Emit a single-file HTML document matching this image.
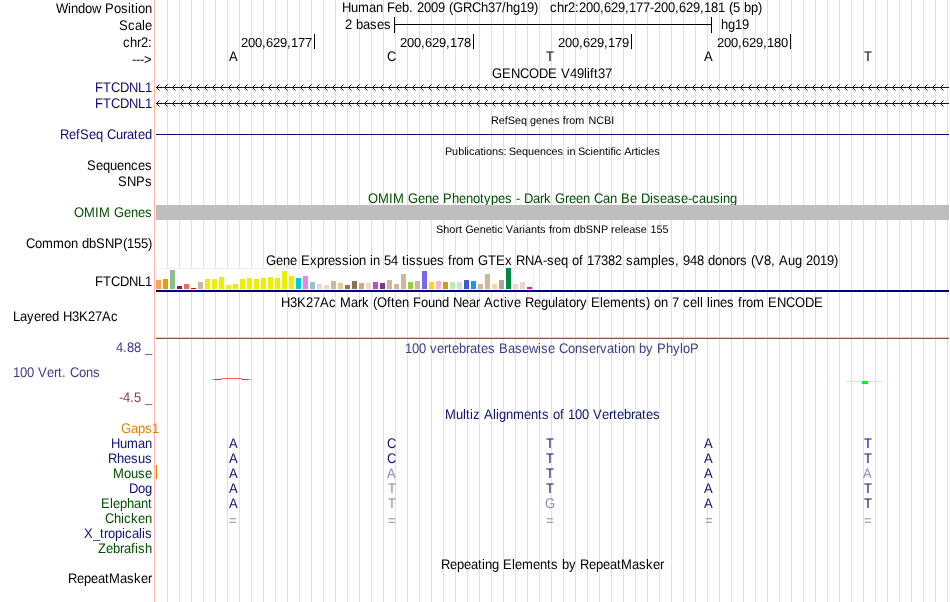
<!DOCTYPE html>
<html><head><meta charset="utf-8"><title>UCSC Genome Browser</title>
<style>html,body{margin:0;padding:0;background:#fff}svg{display:block;will-change:transform}svg{font-family:"Liberation Sans", sans-serif;font-size:13px}text{white-space:pre}</style>
</head><body>
<svg width="950" height="602" viewBox="0 0 950 602">
<rect x="0" y="0" width="950" height="602" fill="#fff"/>
<g shape-rendering="crispEdges">
<rect x="167" y="0" width="1" height="602" fill="#dcdcff"/>
<rect x="179" y="0" width="1" height="602" fill="#dcdcff"/>
<rect x="191" y="0" width="1" height="602" fill="#dcdcff"/>
<rect x="203" y="0" width="1" height="602" fill="#dcdcff"/>
<rect x="215" y="0" width="1" height="602" fill="#dcdcff"/>
<rect x="227" y="0" width="1" height="602" fill="#dcdcff"/>
<rect x="239" y="0" width="1" height="602" fill="#dcdcff"/>
<rect x="251" y="0" width="1" height="602" fill="#dcdcff"/>
<rect x="263" y="0" width="1" height="602" fill="#dcdcff"/>
<rect x="275" y="0" width="1" height="602" fill="#dcdcff"/>
<rect x="287" y="0" width="1" height="602" fill="#dcdcff"/>
<rect x="299" y="0" width="1" height="602" fill="#dcdcff"/>
<rect x="311" y="0" width="1" height="602" fill="#dcdcff"/>
<rect x="323" y="0" width="1" height="602" fill="#dcdcff"/>
<rect x="335" y="0" width="1" height="602" fill="#dcdcff"/>
<rect x="347" y="0" width="1" height="602" fill="#dcdcff"/>
<rect x="359" y="0" width="1" height="602" fill="#dcdcff"/>
<rect x="371" y="0" width="1" height="602" fill="#dcdcff"/>
<rect x="383" y="0" width="1" height="602" fill="#dcdcff"/>
<rect x="395" y="0" width="1" height="602" fill="#dcdcff"/>
<rect x="407" y="0" width="1" height="602" fill="#dcdcff"/>
<rect x="419" y="0" width="1" height="602" fill="#dcdcff"/>
<rect x="431" y="0" width="1" height="602" fill="#dcdcff"/>
<rect x="443" y="0" width="1" height="602" fill="#dcdcff"/>
<rect x="455" y="0" width="1" height="602" fill="#dcdcff"/>
<rect x="467" y="0" width="1" height="602" fill="#dcdcff"/>
<rect x="479" y="0" width="1" height="602" fill="#dcdcff"/>
<rect x="491" y="0" width="1" height="602" fill="#dcdcff"/>
<rect x="503" y="0" width="1" height="602" fill="#dcdcff"/>
<rect x="515" y="0" width="1" height="602" fill="#dcdcff"/>
<rect x="527" y="0" width="1" height="602" fill="#dcdcff"/>
<rect x="539" y="0" width="1" height="602" fill="#dcdcff"/>
<rect x="551" y="0" width="1" height="602" fill="#dcdcff"/>
<rect x="563" y="0" width="1" height="602" fill="#dcdcff"/>
<rect x="575" y="0" width="1" height="602" fill="#dcdcff"/>
<rect x="587" y="0" width="1" height="602" fill="#dcdcff"/>
<rect x="599" y="0" width="1" height="602" fill="#dcdcff"/>
<rect x="611" y="0" width="1" height="602" fill="#dcdcff"/>
<rect x="623" y="0" width="1" height="602" fill="#dcdcff"/>
<rect x="635" y="0" width="1" height="602" fill="#dcdcff"/>
<rect x="647" y="0" width="1" height="602" fill="#dcdcff"/>
<rect x="659" y="0" width="1" height="602" fill="#dcdcff"/>
<rect x="671" y="0" width="1" height="602" fill="#dcdcff"/>
<rect x="683" y="0" width="1" height="602" fill="#dcdcff"/>
<rect x="695" y="0" width="1" height="602" fill="#dcdcff"/>
<rect x="707" y="0" width="1" height="602" fill="#dcdcff"/>
<rect x="719" y="0" width="1" height="602" fill="#dcdcff"/>
<rect x="731" y="0" width="1" height="602" fill="#dcdcff"/>
<rect x="743" y="0" width="1" height="602" fill="#dcdcff"/>
<rect x="755" y="0" width="1" height="602" fill="#dcdcff"/>
<rect x="767" y="0" width="1" height="602" fill="#dcdcff"/>
<rect x="779" y="0" width="1" height="602" fill="#dcdcff"/>
<rect x="791" y="0" width="1" height="602" fill="#dcdcff"/>
<rect x="803" y="0" width="1" height="602" fill="#dcdcff"/>
<rect x="815" y="0" width="1" height="602" fill="#dcdcff"/>
<rect x="827" y="0" width="1" height="602" fill="#dcdcff"/>
<rect x="839" y="0" width="1" height="602" fill="#dcdcff"/>
<rect x="851" y="0" width="1" height="602" fill="#dcdcff"/>
<rect x="863" y="0" width="1" height="602" fill="#dcdcff"/>
<rect x="875" y="0" width="1" height="602" fill="#dcdcff"/>
<rect x="887" y="0" width="1" height="602" fill="#dcdcff"/>
<rect x="899" y="0" width="1" height="602" fill="#dcdcff"/>
<rect x="911" y="0" width="1" height="602" fill="#dcdcff"/>
<rect x="923" y="0" width="1" height="602" fill="#dcdcff"/>
<rect x="935" y="0" width="1" height="602" fill="#dcdcff"/>
<rect x="947" y="0" width="1" height="602" fill="#dcdcff"/>
<rect x="154" y="0" width="1" height="602" fill="#ffb4b4"/>
</g>
<text x="56 68 71 78 85 92 101 105 114 121 128 131 135 138 145" transform="matrix(1 0 0.001 1.07 0 12.6)">Window Position</text>
<text x="119 128 135 142 145" transform="matrix(1 0 0.001 1.07 0 29.6)">Scale</text>
<text x="123 130 137 141 148" transform="matrix(1 0 0.001 1.07 0 46.7)">chr2:</text>
<text x="132 136 140 144" transform="matrix(1 0 0.001 1.07 0 63.5)">---&gt;</text>
<text x="342 351 358 369 376 383 387 395 402 409 413 417 424 431 438 445 449 453 463 472 481 488 495 502 506 513 520 527 534" transform="matrix(1 0 0.001 1.07 0 12.2)">Human Feb. 2009 (GRCh37/hg19)</text>
<text x="550 557 564 568 575 579 586 593 600 604 611 618 625 629 636 643 650 654 661 668 675 679 686 693 700 704 711 718 725 729 733 740 744 751 758" transform="matrix(1 0 0.001 1.07 0 12.2)">chr2:200,629,177-200,629,181 (5 bp)</text>
<text x="345 352 356 363 370 377 384" transform="matrix(1 0 0.001 1.07 0 29)">2 bases</text>
<text x="721 728 735 742" transform="matrix(1 0 0.001 1.07 0 29)">hg19</text>
<g shape-rendering="crispEdges">
<rect x="394" y="24" width="318" height="1" fill="#000"/>
<rect x="394" y="17" width="1" height="16" fill="#000"/>
<rect x="711" y="17" width="1" height="16" fill="#000"/>
</g>
<g shape-rendering="crispEdges">
<rect x="314" y="34" width="1" height="15" fill="#000"/>
<rect x="473" y="34" width="1" height="15" fill="#000"/>
<rect x="631" y="34" width="1" height="15" fill="#000"/>
<rect x="790" y="34" width="1" height="15" fill="#000"/>
</g>
<text x="241 248 255 262 266 273 280 287 291 298 305" transform="matrix(1 0 0.001 1.0 0 47)">200,629,177</text>
<text x="400 407 414 421 425 432 439 446 450 457 464" transform="matrix(1 0 0.001 1.0 0 47)">200,629,178</text>
<text x="558 565 572 579 583 590 597 604 608 615 622" transform="matrix(1 0 0.001 1.0 0 47)">200,629,179</text>
<text x="717 724 731 738 742 749 756 763 767 774 781" transform="matrix(1 0 0.001 1.0 0 47)">200,629,180</text>
<text x="229" transform="matrix(1 0 0.001 1.07 0 61)">A</text>
<text x="387" transform="matrix(1 0 0.001 1.07 0 61)">C</text>
<text x="546" transform="matrix(1 0 0.001 1.07 0 61)">T</text>
<text x="704" transform="matrix(1 0 0.001 1.07 0 61)">A</text>
<text x="864" transform="matrix(1 0 0.001 1.07 0 61)">T</text>
<text x="492 502 511 520 529 539 548 557 561 570 577 584 587 590 594 598 605" transform="matrix(1 0 0.001 1.07 0 78)">GENCODE V49lift37</text>
<text x="95 103 111 120 129 138 145" transform="matrix(1 0 0.001 1.07 0 92)" fill="#0c0c78">FTCDNL1</text>
<text x="95 103 111 120 129 138 145" transform="matrix(1 0 0.001 1.07 0 108)" fill="#0c0c78">FTCDNL1</text>
<rect x="156" y="87" width="793" height="1" fill="#0c0c78" shape-rendering="crispEdges"/>
<path d="M159.5 84.5L156.5 87.5L159.5 90.5M167.5 84.5L164.5 87.5L167.5 90.5M175.5 84.5L172.5 87.5L175.5 90.5M183.5 84.5L180.5 87.5L183.5 90.5M191.5 84.5L188.5 87.5L191.5 90.5M199.5 84.5L196.5 87.5L199.5 90.5M207.5 84.5L204.5 87.5L207.5 90.5M215.5 84.5L212.5 87.5L215.5 90.5M223.5 84.5L220.5 87.5L223.5 90.5M231.5 84.5L228.5 87.5L231.5 90.5M239.5 84.5L236.5 87.5L239.5 90.5M247.5 84.5L244.5 87.5L247.5 90.5M255.5 84.5L252.5 87.5L255.5 90.5M263.5 84.5L260.5 87.5L263.5 90.5M271.5 84.5L268.5 87.5L271.5 90.5M279.5 84.5L276.5 87.5L279.5 90.5M287.5 84.5L284.5 87.5L287.5 90.5M295.5 84.5L292.5 87.5L295.5 90.5M303.5 84.5L300.5 87.5L303.5 90.5M311.5 84.5L308.5 87.5L311.5 90.5M319.5 84.5L316.5 87.5L319.5 90.5M327.5 84.5L324.5 87.5L327.5 90.5M335.5 84.5L332.5 87.5L335.5 90.5M343.5 84.5L340.5 87.5L343.5 90.5M351.5 84.5L348.5 87.5L351.5 90.5M359.5 84.5L356.5 87.5L359.5 90.5M367.5 84.5L364.5 87.5L367.5 90.5M375.5 84.5L372.5 87.5L375.5 90.5M383.5 84.5L380.5 87.5L383.5 90.5M391.5 84.5L388.5 87.5L391.5 90.5M399.5 84.5L396.5 87.5L399.5 90.5M407.5 84.5L404.5 87.5L407.5 90.5M415.5 84.5L412.5 87.5L415.5 90.5M423.5 84.5L420.5 87.5L423.5 90.5M431.5 84.5L428.5 87.5L431.5 90.5M439.5 84.5L436.5 87.5L439.5 90.5M447.5 84.5L444.5 87.5L447.5 90.5M455.5 84.5L452.5 87.5L455.5 90.5M463.5 84.5L460.5 87.5L463.5 90.5M471.5 84.5L468.5 87.5L471.5 90.5M479.5 84.5L476.5 87.5L479.5 90.5M487.5 84.5L484.5 87.5L487.5 90.5M495.5 84.5L492.5 87.5L495.5 90.5M503.5 84.5L500.5 87.5L503.5 90.5M511.5 84.5L508.5 87.5L511.5 90.5M519.5 84.5L516.5 87.5L519.5 90.5M527.5 84.5L524.5 87.5L527.5 90.5M535.5 84.5L532.5 87.5L535.5 90.5M543.5 84.5L540.5 87.5L543.5 90.5M551.5 84.5L548.5 87.5L551.5 90.5M559.5 84.5L556.5 87.5L559.5 90.5M567.5 84.5L564.5 87.5L567.5 90.5M575.5 84.5L572.5 87.5L575.5 90.5M583.5 84.5L580.5 87.5L583.5 90.5M591.5 84.5L588.5 87.5L591.5 90.5M599.5 84.5L596.5 87.5L599.5 90.5M607.5 84.5L604.5 87.5L607.5 90.5M615.5 84.5L612.5 87.5L615.5 90.5M623.5 84.5L620.5 87.5L623.5 90.5M631.5 84.5L628.5 87.5L631.5 90.5M639.5 84.5L636.5 87.5L639.5 90.5M647.5 84.5L644.5 87.5L647.5 90.5M655.5 84.5L652.5 87.5L655.5 90.5M663.5 84.5L660.5 87.5L663.5 90.5M671.5 84.5L668.5 87.5L671.5 90.5M679.5 84.5L676.5 87.5L679.5 90.5M687.5 84.5L684.5 87.5L687.5 90.5M695.5 84.5L692.5 87.5L695.5 90.5M703.5 84.5L700.5 87.5L703.5 90.5M711.5 84.5L708.5 87.5L711.5 90.5M719.5 84.5L716.5 87.5L719.5 90.5M727.5 84.5L724.5 87.5L727.5 90.5M735.5 84.5L732.5 87.5L735.5 90.5M743.5 84.5L740.5 87.5L743.5 90.5M751.5 84.5L748.5 87.5L751.5 90.5M759.5 84.5L756.5 87.5L759.5 90.5M767.5 84.5L764.5 87.5L767.5 90.5M775.5 84.5L772.5 87.5L775.5 90.5M783.5 84.5L780.5 87.5L783.5 90.5M791.5 84.5L788.5 87.5L791.5 90.5M799.5 84.5L796.5 87.5L799.5 90.5M807.5 84.5L804.5 87.5L807.5 90.5M815.5 84.5L812.5 87.5L815.5 90.5M823.5 84.5L820.5 87.5L823.5 90.5M831.5 84.5L828.5 87.5L831.5 90.5M839.5 84.5L836.5 87.5L839.5 90.5M847.5 84.5L844.5 87.5L847.5 90.5M855.5 84.5L852.5 87.5L855.5 90.5M863.5 84.5L860.5 87.5L863.5 90.5M871.5 84.5L868.5 87.5L871.5 90.5M879.5 84.5L876.5 87.5L879.5 90.5M887.5 84.5L884.5 87.5L887.5 90.5M895.5 84.5L892.5 87.5L895.5 90.5M903.5 84.5L900.5 87.5L903.5 90.5M911.5 84.5L908.5 87.5L911.5 90.5M919.5 84.5L916.5 87.5L919.5 90.5M927.5 84.5L924.5 87.5L927.5 90.5M935.5 84.5L932.5 87.5L935.5 90.5M943.5 84.5L940.5 87.5L943.5 90.5" fill="none" stroke="#0c0c78" stroke-width="1"/>
<rect x="156" y="103" width="793" height="1" fill="#0c0c78" shape-rendering="crispEdges"/>
<path d="M159.5 100.5L156.5 103.5L159.5 106.5M167.5 100.5L164.5 103.5L167.5 106.5M175.5 100.5L172.5 103.5L175.5 106.5M183.5 100.5L180.5 103.5L183.5 106.5M191.5 100.5L188.5 103.5L191.5 106.5M199.5 100.5L196.5 103.5L199.5 106.5M207.5 100.5L204.5 103.5L207.5 106.5M215.5 100.5L212.5 103.5L215.5 106.5M223.5 100.5L220.5 103.5L223.5 106.5M231.5 100.5L228.5 103.5L231.5 106.5M239.5 100.5L236.5 103.5L239.5 106.5M247.5 100.5L244.5 103.5L247.5 106.5M255.5 100.5L252.5 103.5L255.5 106.5M263.5 100.5L260.5 103.5L263.5 106.5M271.5 100.5L268.5 103.5L271.5 106.5M279.5 100.5L276.5 103.5L279.5 106.5M287.5 100.5L284.5 103.5L287.5 106.5M295.5 100.5L292.5 103.5L295.5 106.5M303.5 100.5L300.5 103.5L303.5 106.5M311.5 100.5L308.5 103.5L311.5 106.5M319.5 100.5L316.5 103.5L319.5 106.5M327.5 100.5L324.5 103.5L327.5 106.5M335.5 100.5L332.5 103.5L335.5 106.5M343.5 100.5L340.5 103.5L343.5 106.5M351.5 100.5L348.5 103.5L351.5 106.5M359.5 100.5L356.5 103.5L359.5 106.5M367.5 100.5L364.5 103.5L367.5 106.5M375.5 100.5L372.5 103.5L375.5 106.5M383.5 100.5L380.5 103.5L383.5 106.5M391.5 100.5L388.5 103.5L391.5 106.5M399.5 100.5L396.5 103.5L399.5 106.5M407.5 100.5L404.5 103.5L407.5 106.5M415.5 100.5L412.5 103.5L415.5 106.5M423.5 100.5L420.5 103.5L423.5 106.5M431.5 100.5L428.5 103.5L431.5 106.5M439.5 100.5L436.5 103.5L439.5 106.5M447.5 100.5L444.5 103.5L447.5 106.5M455.5 100.5L452.5 103.5L455.5 106.5M463.5 100.5L460.5 103.5L463.5 106.5M471.5 100.5L468.5 103.5L471.5 106.5M479.5 100.5L476.5 103.5L479.5 106.5M487.5 100.5L484.5 103.5L487.5 106.5M495.5 100.5L492.5 103.5L495.5 106.5M503.5 100.5L500.5 103.5L503.5 106.5M511.5 100.5L508.5 103.5L511.5 106.5M519.5 100.5L516.5 103.5L519.5 106.5M527.5 100.5L524.5 103.5L527.5 106.5M535.5 100.5L532.5 103.5L535.5 106.5M543.5 100.5L540.5 103.5L543.5 106.5M551.5 100.5L548.5 103.5L551.5 106.5M559.5 100.5L556.5 103.5L559.5 106.5M567.5 100.5L564.5 103.5L567.5 106.5M575.5 100.5L572.5 103.5L575.5 106.5M583.5 100.5L580.5 103.5L583.5 106.5M591.5 100.5L588.5 103.5L591.5 106.5M599.5 100.5L596.5 103.5L599.5 106.5M607.5 100.5L604.5 103.5L607.5 106.5M615.5 100.5L612.5 103.5L615.5 106.5M623.5 100.5L620.5 103.5L623.5 106.5M631.5 100.5L628.5 103.5L631.5 106.5M639.5 100.5L636.5 103.5L639.5 106.5M647.5 100.5L644.5 103.5L647.5 106.5M655.5 100.5L652.5 103.5L655.5 106.5M663.5 100.5L660.5 103.5L663.5 106.5M671.5 100.5L668.5 103.5L671.5 106.5M679.5 100.5L676.5 103.5L679.5 106.5M687.5 100.5L684.5 103.5L687.5 106.5M695.5 100.5L692.5 103.5L695.5 106.5M703.5 100.5L700.5 103.5L703.5 106.5M711.5 100.5L708.5 103.5L711.5 106.5M719.5 100.5L716.5 103.5L719.5 106.5M727.5 100.5L724.5 103.5L727.5 106.5M735.5 100.5L732.5 103.5L735.5 106.5M743.5 100.5L740.5 103.5L743.5 106.5M751.5 100.5L748.5 103.5L751.5 106.5M759.5 100.5L756.5 103.5L759.5 106.5M767.5 100.5L764.5 103.5L767.5 106.5M775.5 100.5L772.5 103.5L775.5 106.5M783.5 100.5L780.5 103.5L783.5 106.5M791.5 100.5L788.5 103.5L791.5 106.5M799.5 100.5L796.5 103.5L799.5 106.5M807.5 100.5L804.5 103.5L807.5 106.5M815.5 100.5L812.5 103.5L815.5 106.5M823.5 100.5L820.5 103.5L823.5 106.5M831.5 100.5L828.5 103.5L831.5 106.5M839.5 100.5L836.5 103.5L839.5 106.5M847.5 100.5L844.5 103.5L847.5 106.5M855.5 100.5L852.5 103.5L855.5 106.5M863.5 100.5L860.5 103.5L863.5 106.5M871.5 100.5L868.5 103.5L871.5 106.5M879.5 100.5L876.5 103.5L879.5 106.5M887.5 100.5L884.5 103.5L887.5 106.5M895.5 100.5L892.5 103.5L895.5 106.5M903.5 100.5L900.5 103.5L903.5 106.5M911.5 100.5L908.5 103.5L911.5 106.5M919.5 100.5L916.5 103.5L919.5 106.5M927.5 100.5L924.5 103.5L927.5 106.5M935.5 100.5L932.5 103.5L935.5 106.5M943.5 100.5L940.5 103.5L943.5 106.5" fill="none" stroke="#0c0c78" stroke-width="1"/>
<text x="490.9 498.74 504.77 507.78 515.02 521.06 527.09 529.9 535.93 541.97 548.0 554.04 559.46 562.7 565.71 569.33 575.36 584.4 588.4 596.24 604.07 611.31" transform="matrix(1 0 0.001 1.0 0 124)" font-size="10.85">RefSeq genes from NCBI</text>
<text x="60 69 76 80 89 96 103 107 116 123 127 134 138 145" transform="matrix(1 0 0.001 1.07 0 139)" fill="#0c0c78">RefSeq Curated</text>
<rect x="156" y="134" width="793" height="1" fill="#0c0c78" shape-rendering="crispEdges"/>
<text x="444.9 452.14 458.17 464.21 466.62 469.03 474.45 480.49 483.5 485.91 491.94 497.98 503.4 506.42 508.7 515.94 521.97 528.01 534.04 540.07 546.11 551.53 557.57 562.99 567.0 569.41 575.44 577.9 585.14 590.56 592.97 599.01 605.04 608.06 610.47 613.48 615.89 621.32 624.2 631.44 635.05 638.06 640.48 645.9 648.31 654.34" transform="matrix(1 0 0.001 1.0 0 155)" font-size="10.85">Publications: Sequences in Scientific Articles</text>
<text x="87 96 103 110 117 124 131 138 145" transform="matrix(1 0 0.001 1.07 0 170)">Sequences</text>
<text x="118 127 136 145" transform="matrix(1 0 0.001 1.07 0 186)">SNPs</text>
<text x="368 378 389 393 404 408 418 425 432 439 443 452 459 466 473 480 484 491 498 505 512 516 520 524 533 540 544 551 555 565 569 576 583 590 594 603 610 617 621 630 637 641 650 653 660 667 674 681 688 692 699 706 713 720 723 730" transform="matrix(1 0 0.001 1.07 0 203)" fill="#005000">OMIM Gene Phenotypes - Dark Green Can Be Disease-causing</text>
<text x="74 84 95 99 110 114 124 131 138 145" transform="matrix(1 0 0.001 1.07 0 217)" fill="#005000">OMIM Genes</text>
<rect x="156" y="205" width="793" height="15" fill="#bebebe" shape-rendering="crispEdges"/>
<text x="436.1 443.34 449.37 455.41 459.02 462.03 465.2 473.64 479.67 485.71 491.74 494.76 497.17 502.59 505.7 512.94 518.97 522.58 524.99 531.03 537.06 540.08 545.5 549.0 552.01 555.63 561.66 570.7 573.8 579.83 585.87 593.11 600.94 608.18 611.1 614.71 620.75 623.16 629.19 635.23 640.65 646.69 650.4 656.43 662.47" transform="matrix(1 0 0.001 1.0 0 233)" font-size="10.85">Short Genetic Variants from dbSNP release 155</text>
<text x="26 35 42 53 64 71 78 82 89 96 105 114 123 127 134 141 148" transform="matrix(1 0 0.001 1.07 0 248)">Common dbSNP(155)</text>
<text x="266 276 283 290 297 301 310 317 324 328 335 342 349 352 359 366 370 373 380 384 391 398 402 406 409 416 423 430 437 444 448 452 456 463 474 478 488 496 505 512 516 525 534 543 547 554 561 568 572 579 583 587 594 601 608 615 622 626 633 640 651 658 661 668 675 679 683 690 697 704 708 715 722 729 736 740 747 751 755 764 771 775 779 788 795 802 806 813 820 827 834" transform="matrix(1 0 0.001 1.07 0 265)">Gene Expression in 54 tissues from GTEx RNA-seq of 17382 samples, 948 donors (V8, Aug 2019)</text>
<text x="95 103 111 120 129 138 145" transform="matrix(1 0 0.001 1.07 0 286)">FTCDNL1</text>
<g shape-rendering="crispEdges">
<rect x="156" y="268" width="378" height="22" fill="#fff"/>
<rect x="156" y="268" width="378" height="1" fill="#efefef"/>
<rect x="156" y="289" width="378" height="1" fill="#f4f4f4"/>
<rect x="156" y="268" width="1" height="22" fill="#f4f4f4"/>
<rect x="533" y="268" width="1" height="22" fill="#efefef"/>
<rect x="156" y="280" width="5" height="9" fill="#FFA54F"/>
<rect x="163" y="279" width="5" height="10" fill="#EE9A00"/>
<rect x="170" y="270" width="5" height="19" fill="#8FBC8F"/>
<rect x="177" y="286" width="5" height="3" fill="#8B1C62"/>
<rect x="184" y="284" width="5" height="5" fill="#EE6A50"/>
<rect x="191" y="288" width="5" height="1" fill="#FF0000"/>
<rect x="198" y="282" width="5" height="7" fill="#CDB79E"/>
<rect x="205" y="279" width="5" height="10" fill="#EEEE00"/>
<rect x="212" y="279" width="5" height="10" fill="#EEEE00"/>
<rect x="219" y="277" width="5" height="12" fill="#EEEE00"/>
<rect x="226" y="285" width="5" height="4" fill="#EEEE00"/>
<rect x="233" y="284" width="5" height="5" fill="#EEEE00"/>
<rect x="240" y="279" width="5" height="10" fill="#EEEE00"/>
<rect x="247" y="278" width="5" height="11" fill="#EEEE00"/>
<rect x="254" y="279" width="5" height="10" fill="#EEEE00"/>
<rect x="261" y="278" width="5" height="11" fill="#EEEE00"/>
<rect x="268" y="277" width="5" height="12" fill="#EEEE00"/>
<rect x="275" y="278" width="5" height="11" fill="#EEEE00"/>
<rect x="282" y="271" width="5" height="18" fill="#EEEE00"/>
<rect x="289" y="276" width="5" height="13" fill="#EEEE00"/>
<rect x="296" y="278" width="5" height="11" fill="#00CDCD"/>
<rect x="303" y="276" width="5" height="13" fill="#EE82EE"/>
<rect x="310" y="282" width="5" height="7" fill="#9AC0CD"/>
<rect x="317" y="284" width="5" height="5" fill="#EED5D2"/>
<rect x="324" y="285" width="5" height="4" fill="#EED5D2"/>
<rect x="331" y="281" width="5" height="8" fill="#CDB79E"/>
<rect x="338" y="283" width="5" height="6" fill="#EEC591"/>
<rect x="345" y="285" width="5" height="4" fill="#8B7355"/>
<rect x="352" y="281" width="5" height="8" fill="#8B7355"/>
<rect x="359" y="283" width="5" height="6" fill="#CDAA7D"/>
<rect x="366" y="283" width="5" height="6" fill="#EED5D2"/>
<rect x="373" y="282" width="5" height="7" fill="#B452CD"/>
<rect x="380" y="283" width="5" height="6" fill="#7A378B"/>
<rect x="387" y="280" width="5" height="9" fill="#CDB79E"/>
<rect x="394" y="284" width="5" height="5" fill="#CDB79E"/>
<rect x="401" y="274" width="5" height="15" fill="#CDB79E"/>
<rect x="408" y="282" width="5" height="7" fill="#9ACD32"/>
<rect x="415" y="281" width="5" height="8" fill="#CDB79E"/>
<rect x="422" y="271" width="5" height="18" fill="#7A67EE"/>
<rect x="429" y="282" width="5" height="7" fill="#FFD700"/>
<rect x="436" y="281" width="5" height="8" fill="#FFB6C1"/>
<rect x="443" y="282" width="5" height="7" fill="#CD9B1D"/>
<rect x="450" y="282" width="5" height="7" fill="#B4EEB4"/>
<rect x="457" y="282" width="5" height="7" fill="#D9D9D9"/>
<rect x="464" y="280" width="5" height="9" fill="#3A5FCD"/>
<rect x="471" y="281" width="5" height="8" fill="#1E90FF"/>
<rect x="478" y="284" width="5" height="5" fill="#CDB79E"/>
<rect x="485" y="274" width="5" height="15" fill="#CDB79E"/>
<rect x="492" y="284" width="5" height="5" fill="#FFD39B"/>
<rect x="499" y="280" width="5" height="9" fill="#A6A6A6"/>
<rect x="506" y="268" width="5" height="21" fill="#008B45"/>
<rect x="513" y="284" width="5" height="5" fill="#EED5D2"/>
<rect x="520" y="282" width="5" height="7" fill="#EED5D2"/>
<rect x="527" y="287" width="5" height="2" fill="#FF00FF"/>
<rect x="156" y="290" width="793" height="2" fill="#00007f"/>
</g>
<text x="281 290 297 306 313 320 329 336 340 351 358 362 369 373 377 387 391 395 402 409 413 421 428 435 442 449 453 462 469 476 480 484 493 500 504 507 514 521 525 534 541 548 555 558 565 569 576 580 587 591 600 603 610 621 628 635 639 646 650 654 661 668 672 679 683 690 697 700 703 707 710 713 720 727 734 738 742 746 753 764 768 777 786 795 805 814" transform="matrix(1 0 0.001 1.07 0 307)">H3K27Ac Mark (Often Found Near Active Regulatory Elements) on 7 cell lines from ENCODE</text>
<text x="13 20 27 34 41 45 52 59 63 72 79 88 95 102 111" transform="matrix(1 0 0.001 1.07 0 321)">Layered H3K27Ac</text>
<g shape-rendering="crispEdges">
<rect x="156" y="337" width="793" height="1" fill="#ffd06a"/>
<rect x="156" y="338" width="793" height="1" fill="#7a5c4e"/>
<rect x="156" y="337" width="1" height="1" fill="#fcc555"/>
<rect x="156" y="338" width="1" height="1" fill="#6a4632"/>
</g>
<text x="405 412 419 426 430 437 444 448 452 459 466 470 477 481 488 495 499 508 515 522 529 538 541 548 555 559 568 575 582 589 596 600 607 614 618 621 628 635 639 646 653 657 666 673 680 683 690" transform="matrix(1 0 0.001 1.07 0 353)" fill="#3c3c8c">100 vertebrates Basewise Conservation by PhyloP</text>
<text x="116 123 127 134 141 145" transform="matrix(1 0 0.001 1.07 0 352)" fill="#3c3c8c">4.88 _</text>
<text x="13 20 27 34 38 47 54 58 62 66 70 79 86 93" transform="matrix(1 0 0.001 1.07 0 377)" fill="#3c3c8c">100 Vert. Cons</text>
<text x="119 123 130 134 141 145" transform="matrix(1 0 0.001 1.07 0 402)" fill="#8c3c3c">-4.5 _</text>
<g shape-rendering="crispEdges">
<defs><linearGradient id="rl" x1="0" x2="1" y1="0" y2="0"><stop offset="0" stop-color="#ff0000" stop-opacity="0.05"/><stop offset="0.45" stop-color="#ff0000" stop-opacity="0.85"/><stop offset="1" stop-color="#ff0000" stop-opacity="0.8"/></linearGradient><linearGradient id="rr" x1="0" x2="1" y1="0" y2="0"><stop offset="0" stop-color="#ff0000" stop-opacity="0.8"/><stop offset="0.55" stop-color="#ff0000" stop-opacity="0.85"/><stop offset="1" stop-color="#ff0000" stop-opacity="0.05"/></linearGradient></defs>
<rect x="211" y="379" width="10" height="1" fill="url(#rl)"/><rect x="221" y="378" width="21" height="1" fill="#ff0000" fill-opacity="0.6"/><rect x="220" y="379" width="2" height="1" fill="#ff0000" fill-opacity="0.3"/><rect x="241" y="379" width="2" height="1" fill="#ff0000" fill-opacity="0.3"/><rect x="242" y="379" width="10" height="1" fill="url(#rr)"/>
<rect x="846" y="381" width="38" height="1" fill="#c0ffc0"/>
<rect x="862" y="381" width="6" height="3" fill="#00ff00"/>
</g>
<text x="445 456 463 466 470 473 480 484 493 496 499 506 513 524 531 538 542 549 553 560 564 568 575 582 589 593 602 609 613 617 624 631 635 642 646 653" transform="matrix(1 0 0.001 1.07 0 419)" fill="#0c1470">Multiz Alignments of 100 Vertebrates</text>
<text x="121 131 138 145" transform="matrix(1 0 0.001 1.07 0 433)" fill="#e68200">Gaps</text>
<text x="152" transform="matrix(1 0 0.001 1.07 0 433)" fill="#e68200">1</text>
<text x="111 120 127 138 145" transform="matrix(1 0 0.001 1.07 0 448)" fill="#0c1470">Human</text>
<text x="108 117 124 131 138 145" transform="matrix(1 0 0.001 1.07 0 463)" fill="#0c1470">Rhesus</text>
<text x="113 124 131 138 145" transform="matrix(1 0 0.001 1.07 0 478)" fill="#005000">Mouse</text>
<text x="129 138 145" transform="matrix(1 0 0.001 1.07 0 493)" fill="#0c1470">Dog</text>
<text x="101 110 113 120 127 134 141 148" transform="matrix(1 0 0.001 1.07 0 508)" fill="#005000">Elephant</text>
<text x="105 114 121 124 131 138 145" transform="matrix(1 0 0.001 1.07 0 523)" fill="#005000">Chicken</text>
<text x="84 93 100 104 108 115 122 125 132 139 142 145" transform="matrix(1 0 0.001 1.07 0 538)" fill="#0c1470">X_tropicalis</text>
<text x="98 106 113 120 124 131 135 138 145" transform="matrix(1 0 0.001 1.07 0 553)" fill="#005000">Zebrafish</text>
<text x="229" transform="matrix(1 0 0.001 1.07 0 448)" fill="#0c1470">A</text>
<text x="387" transform="matrix(1 0 0.001 1.07 0 448)" fill="#0c1470">C</text>
<text x="546" transform="matrix(1 0 0.001 1.07 0 448)" fill="#0c1470">T</text>
<text x="704" transform="matrix(1 0 0.001 1.07 0 448)" fill="#0c1470">A</text>
<text x="864" transform="matrix(1 0 0.001 1.07 0 448)" fill="#0c1470">T</text>
<text x="229" transform="matrix(1 0 0.001 1.07 0 463)" fill="#0c1470">A</text>
<text x="387" transform="matrix(1 0 0.001 1.07 0 463)" fill="#0c1470">C</text>
<text x="546" transform="matrix(1 0 0.001 1.07 0 463)" fill="#0c1470">T</text>
<text x="704" transform="matrix(1 0 0.001 1.07 0 463)" fill="#0c1470">A</text>
<text x="864" transform="matrix(1 0 0.001 1.07 0 463)" fill="#0c1470">T</text>
<text x="229" transform="matrix(1 0 0.001 1.07 0 478)" fill="#0c1470">A</text>
<text x="387" transform="matrix(1 0 0.001 1.07 0 478)" fill="#888cb8">A</text>
<text x="546" transform="matrix(1 0 0.001 1.07 0 478)" fill="#0c1470">T</text>
<text x="704" transform="matrix(1 0 0.001 1.07 0 478)" fill="#0c1470">A</text>
<text x="863" transform="matrix(1 0 0.001 1.07 0 478)" fill="#888cb8">A</text>
<text x="229" transform="matrix(1 0 0.001 1.07 0 493)" fill="#0c1470">A</text>
<text x="388" transform="matrix(1 0 0.001 1.07 0 493)" fill="#888cb8">T</text>
<text x="546" transform="matrix(1 0 0.001 1.07 0 493)" fill="#0c1470">T</text>
<text x="704" transform="matrix(1 0 0.001 1.07 0 493)" fill="#0c1470">A</text>
<text x="864" transform="matrix(1 0 0.001 1.07 0 493)" fill="#0c1470">T</text>
<text x="229" transform="matrix(1 0 0.001 1.07 0 508)" fill="#0c1470">A</text>
<text x="388" transform="matrix(1 0 0.001 1.07 0 508)" fill="#888cb8">T</text>
<text x="545" transform="matrix(1 0 0.001 1.07 0 508)" fill="#888cb8">G</text>
<text x="704" transform="matrix(1 0 0.001 1.07 0 508)" fill="#0c1470">A</text>
<text x="864" transform="matrix(1 0 0.001 1.07 0 508)" fill="#0c1470">T</text>
<text x="229" transform="matrix(1 0 0.001 1.07 0 525)" fill="#888cb8">=</text>
<text x="388" transform="matrix(1 0 0.001 1.07 0 525)" fill="#888cb8">=</text>
<text x="546" transform="matrix(1 0 0.001 1.07 0 525)" fill="#888cb8">=</text>
<text x="705" transform="matrix(1 0 0.001 1.07 0 525)" fill="#888cb8">=</text>
<text x="864" transform="matrix(1 0 0.001 1.07 0 525)" fill="#888cb8">=</text>
<rect x="156" y="465" width="1" height="14" fill="#e68200" shape-rendering="crispEdges"/>
<text x="441 450 457 464 471 478 482 485 492 499 503 512 515 522 533 540 547 551 558 562 569 576 580 589 596 603 610 617 621 632 639 646 653 660" transform="matrix(1 0 0.001 1.07 0 569)">Repeating Elements by RepeatMasker</text>
<text x="68 77 84 91 98 105 109 120 127 134 141 148" transform="matrix(1 0 0.001 1.07 0 583)">RepeatMasker</text>
</svg></body></html>
